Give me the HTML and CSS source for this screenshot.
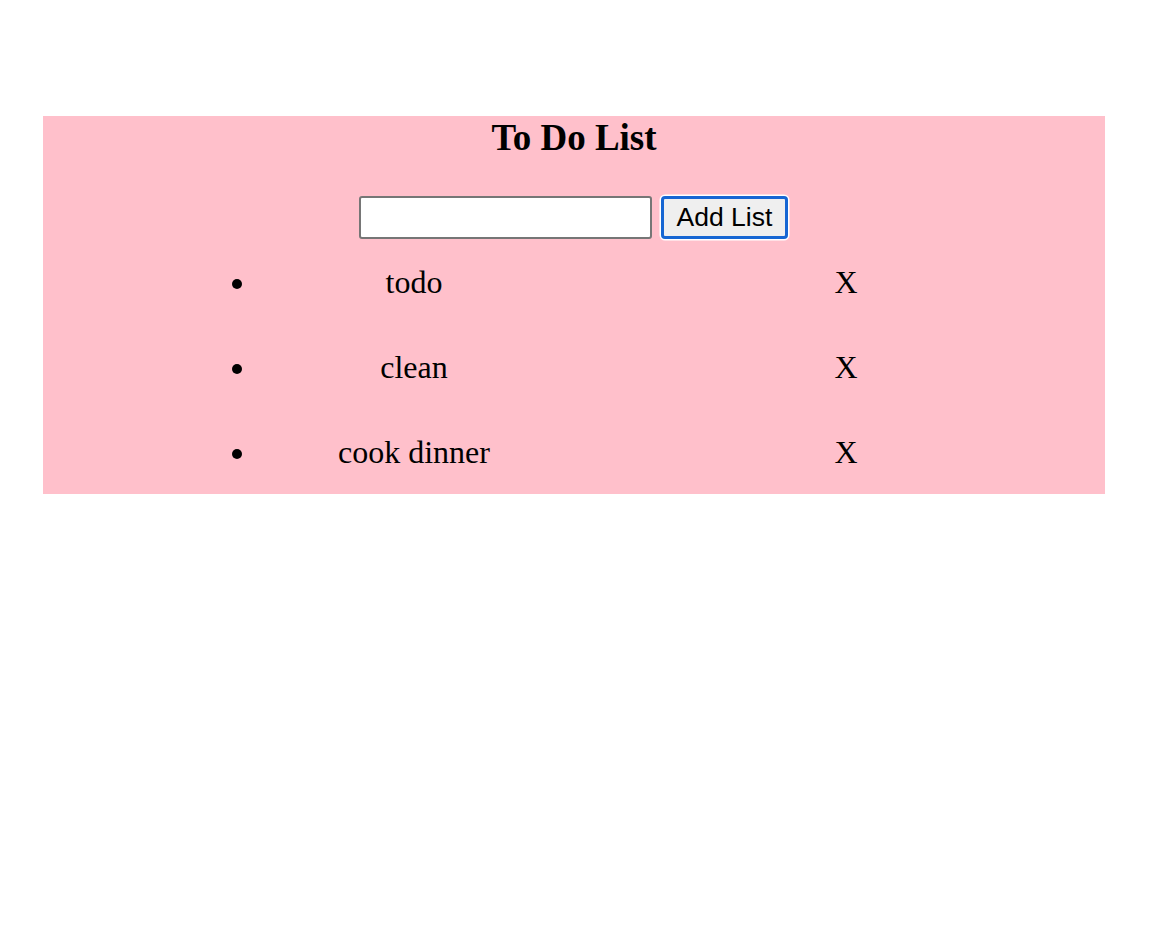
FILE: index.html
```html
<!DOCTYPE html>
<html>
<head>
<meta charset="utf-8">
<title>To Do List</title>
<link rel="stylesheet" href="styles.css">
</head>
<body>
<div class="todo">
  <h1 class="title">To Do List</h1>
  <div class="form">
    <input class="field" type="text">
    <button class="add">Add List</button>
  </div>
  <ul class="list">
    <li class="item"><div class="row"><span class="text">todo</span><span class="del">X</span></div></li>
    <li class="item"><div class="row"><span class="text">clean</span><span class="del">X</span></div></li>
    <li class="item"><div class="row"><span class="text">cook dinner</span><span class="del">X</span></div></li>
  </ul>
</div>
</body>
</html>
```
FILE: styles.css
```css
html, body {
  margin: 0;
  padding: 0;
  background: #fff;
}
body {
  font-family: "Liberation Serif", "Times New Roman", serif;
}
.todo {
  margin: 116px 59px 0 43px;
  background: #ffc0cb;
}
.title {
  margin: 0;
  font-size: 37px;
  line-height: 44px;
  font-weight: bold;
  text-align: center;
}
.form {
  margin-top: 36px;
  display: flex;
  justify-content: center;
  align-items: center;
  gap: 9px;
  height: 43px;
  padding-right: 1px;
}
.field {
  box-sizing: border-box;
  width: 293px;
  height: 43px;
  margin: 0;
  border: 2px solid #767676;
  border-radius: 3px;
  background: #fff;
  padding: 0 4px;
  font-size: 24px;
}
.add {
  box-sizing: border-box;
  width: 127px;
  height: 43px;
  margin: 0;
  padding: 0;
  border: 3px solid #1666d3;
  border-radius: 4px;
  background: #efefef;
  box-shadow: 0 0 0 1.5px #fff;
  font-family: "Liberation Sans", Arial, sans-serif;
  font-size: 26.5px;
  color: #000;
}
.list {
  margin: 0;
  padding: 0 0 0 215px;
  list-style: disc outside;
}
.item {
  padding: 25px 0 23px;
  font-size: 32px;
  line-height: 37px;
}
.row {
  display: flex;
}
.text {
  flex: none;
  width: 312px;
  text-align: center;
}
.del {
  flex: none;
  width: 552px;
  text-align: center;
}
```
